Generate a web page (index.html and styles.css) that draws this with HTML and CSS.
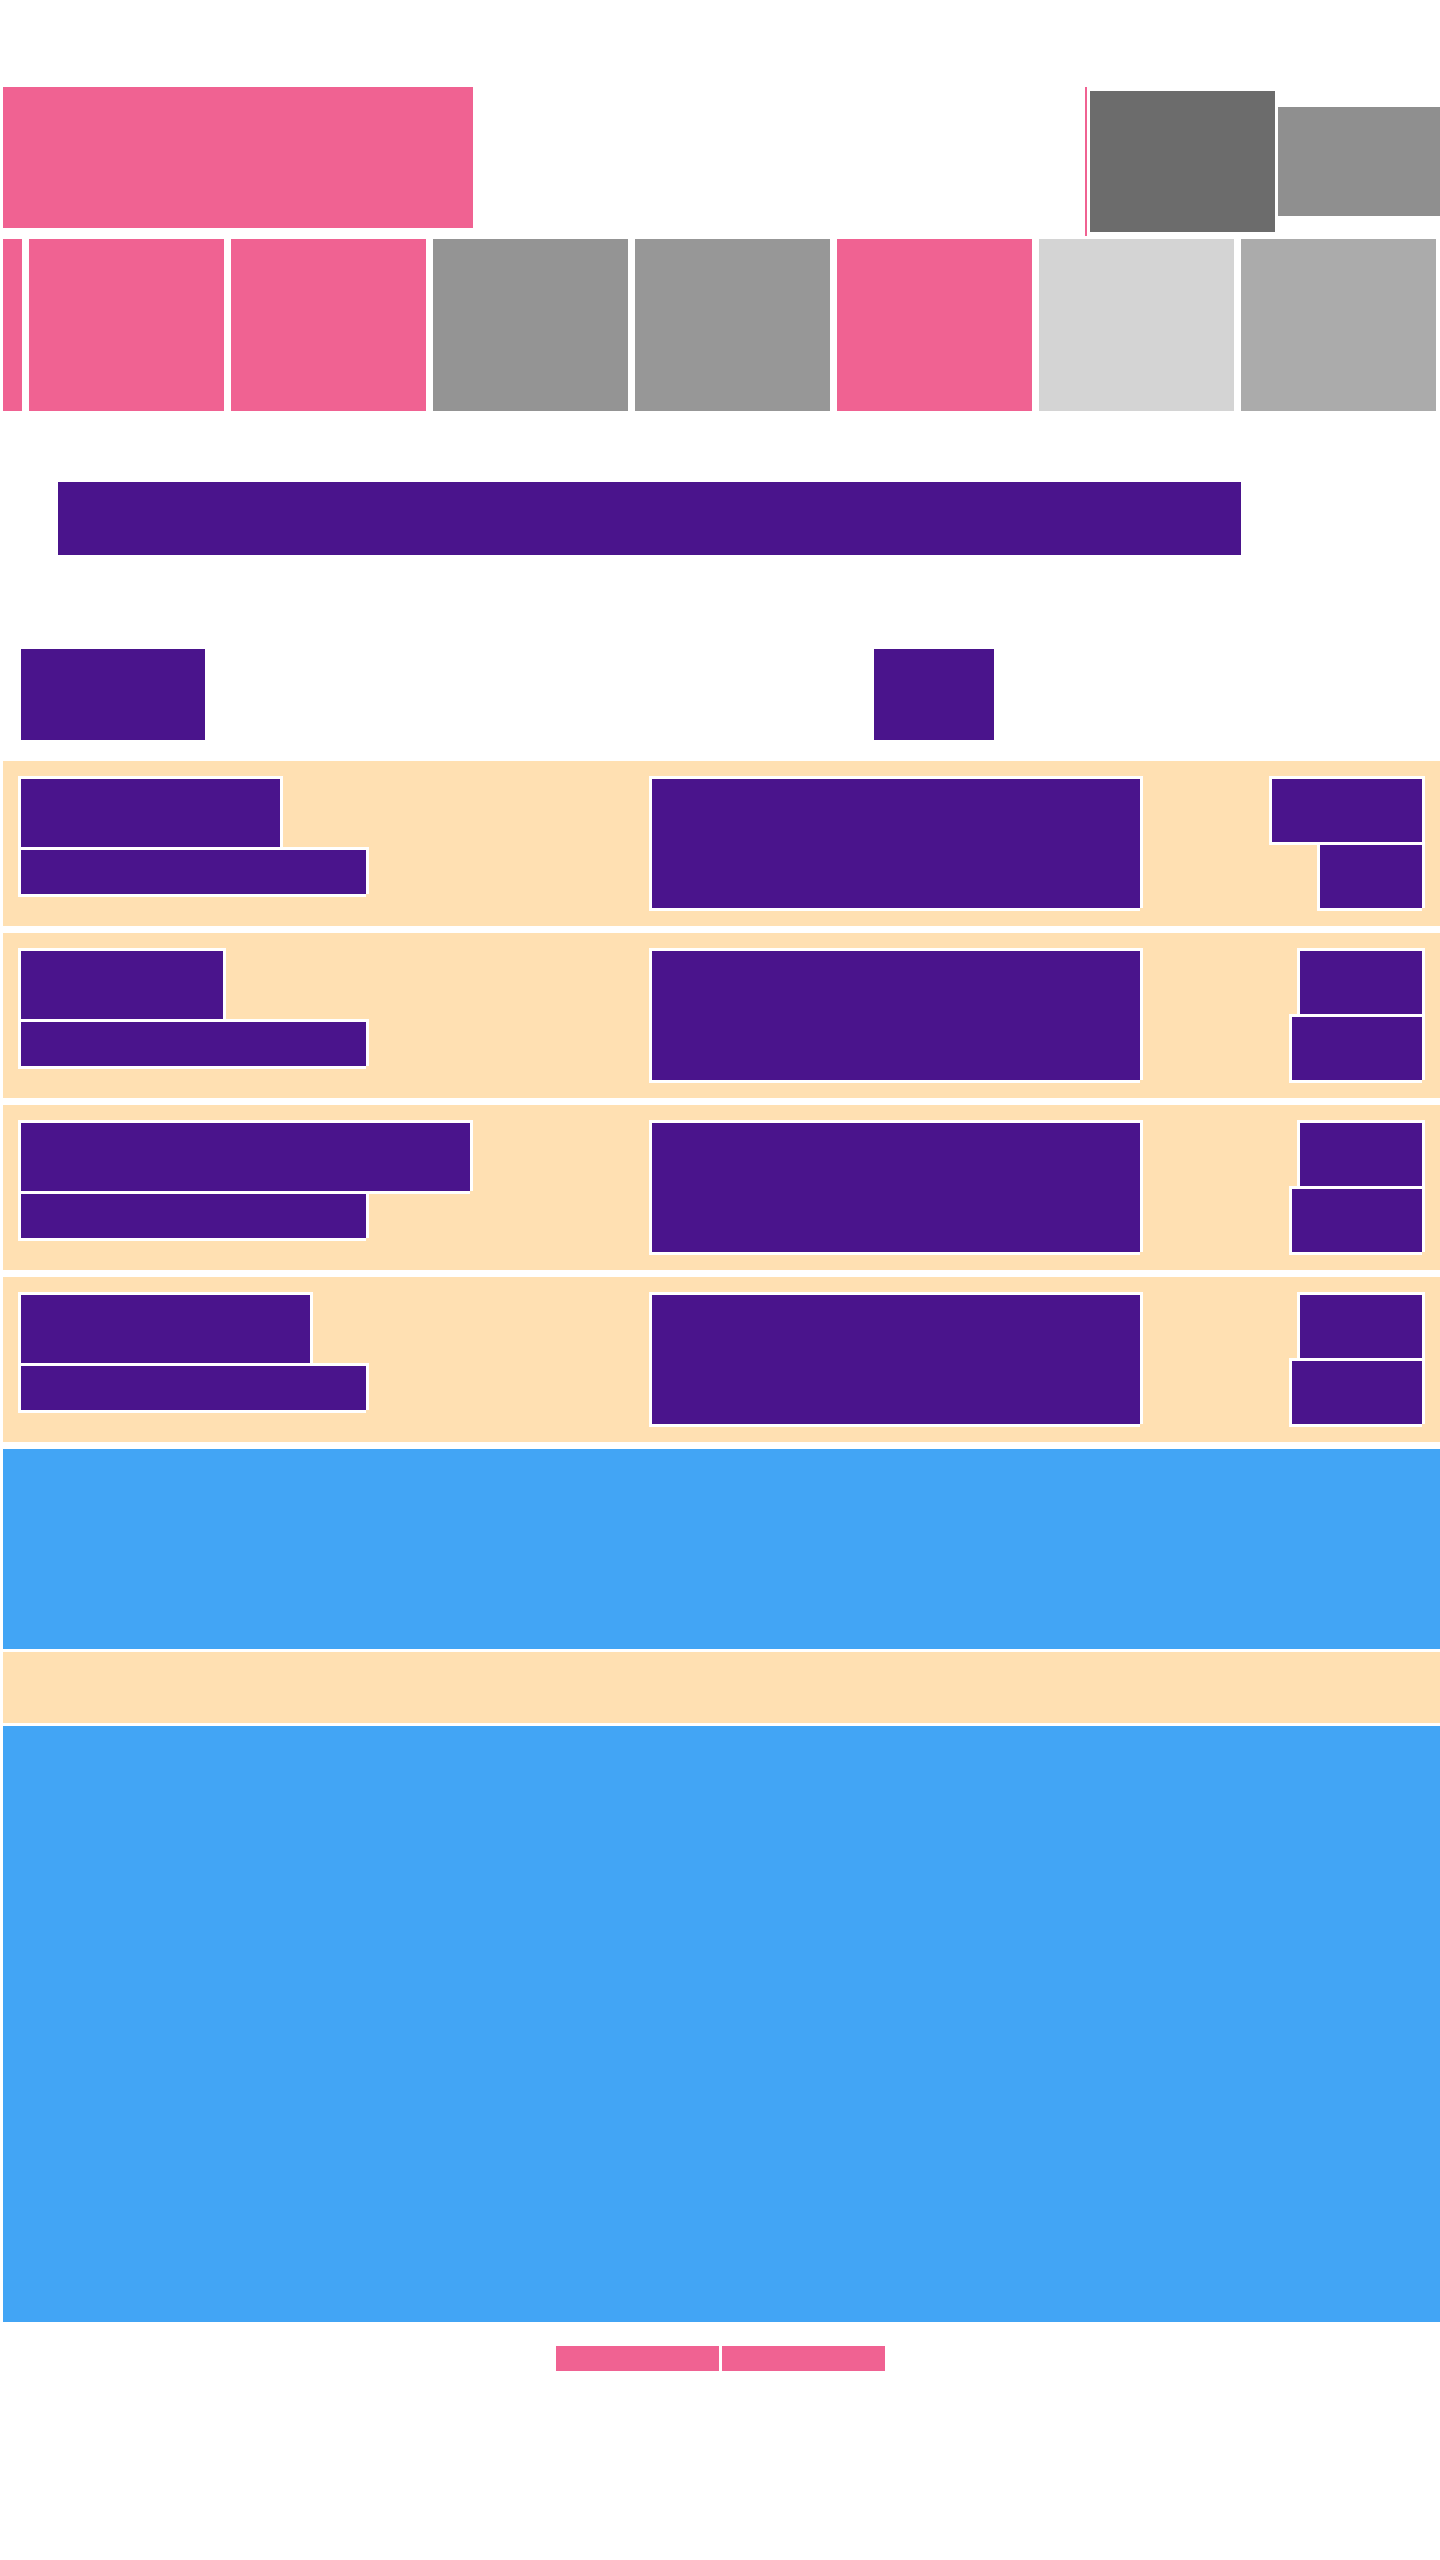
FILE: index.html
```html
<!DOCTYPE html>
<html lang="en">

<head>
    <meta charset="UTF-8">
    <meta name="viewport" content="width=device-width, initial-scale=1.0">
    <title>Wireframe</title>
    <link rel="stylesheet" href="styles.css">
</head>

<body>
    <div class="page">
        <!--Top bar-->
        <header class="topbar">
            <div class="logo"></div>
            <div class="topbar-right">
                <span class="divider"></span>
                <div class="avatar"></div>
                <div class="account"></div>
            </div>
        </header>

        <!--Carousel (scrolled a bit to the right)-->
        <div class="carousel">
            <div class="track">
                <div class="tile pink"></div>
                <div class="tile pink"></div>
                <div class="tile pink"></div>
                <div class="tile grey"></div>
                <div class="tile grey-2"></div>
                <div class="tile pink"></div>
                <div class="tile light"></div>
                <div class="tile mid"></div>
            </div>
        </div>

        <div class="banner"></div>

        <!--List header-->
        <div class="list-head">
            <div class="head-a"></div>
            <div class="head-b"></div>
        </div>

        <!--List rows-->
        <section class="list">
            <div class="item">
                <div class="item-info">
                    <div class="block title t1"></div>
                    <div class="block sub"></div>
                </div>
                <div class="block thumb"></div>
                <div class="item-meta">
                    <div class="block meta-a wide"></div>
                    <div class="block meta-b short"></div>
                </div>
            </div>
            <div class="item">
                <div class="item-info">
                    <div class="block title t2"></div>
                    <div class="block sub"></div>
                </div>
                <div class="block thumb"></div>
                <div class="item-meta">
                    <div class="block meta-a"></div>
                    <div class="block meta-b"></div>
                </div>
            </div>
            <div class="item">
                <div class="item-info">
                    <div class="block title t3"></div>
                    <div class="block sub"></div>
                </div>
                <div class="block thumb"></div>
                <div class="item-meta">
                    <div class="block meta-a"></div>
                    <div class="block meta-b"></div>
                </div>
            </div>
            <div class="item">
                <div class="item-info">
                    <div class="block title t4"></div>
                    <div class="block sub"></div>
                </div>
                <div class="block thumb"></div>
                <div class="item-meta">
                    <div class="block meta-a"></div>
                    <div class="block meta-b"></div>
                </div>
            </div>
        </section>

        <div class="panel"></div>
        <div class="strip"></div>
        <div class="panel big"></div>

        <!--Pager-->
        <div class="pager">
            <button class="pager-btn" title="previous"></button>
            <button class="pager-btn" title="next"></button>
        </div>
    </div>
</body>

</html>
```

FILE: styles.css
```css
* {
    margin: 0;
    padding: 0;
    box-sizing: border-box;
    font-family: 'Liberation Sans', Arial, sans-serif;
}

body {
    background: #ffffff;
}

.page {
    margin-left: 3px;
    width: 1437px;
    padding-bottom: 189px;
}

/* Top bar */
.topbar {
    display: flex;
    justify-content: space-between;
    align-items: flex-start;
    margin-top: 87px;
}

.logo {
    width: 470px;
    height: 141px;
    background: #f06292;
}

.topbar-right {
    display: flex;
    align-items: center;
    gap: 3px;
}

.divider {
    width: 2px;
    height: 149px;
    background: #f06292;
}

.avatar {
    width: 185px;
    height: 141px;
    background: #6c6c6c;
}

.account {
    width: 162px;
    height: 109px;
    background: #8f8f8f;
}

/* Carousel */
.carousel {
    margin-top: 3px;
    height: 172px;
    overflow: hidden;
}

.track {
    display: flex;
    gap: 7px;
    margin-left: -176px;
}

.tile {
    flex: 0 0 195px;
    height: 172px;
}

.tile.pink {
    background: #f06292;
}

.tile.grey {
    background: #949494;
}

.tile.grey-2 {
    background: #979797;
}

.tile.light {
    background: #d4d4d4;
}

.tile.mid {
    background: #ababab;
}

.banner {
    margin: 71px 0 0 55px;
    width: 1183px;
    height: 73px;
    background: #4a148c;
}

/* List header */
.list-head {
    display: grid;
    grid-template-columns: 853px 120px;
    margin-top: 94px;
    padding-left: 18px;
}

.head-a,
.head-b {
    height: 91px;
    background: #4a148c;
}

.head-a {
    width: 184px;
}

/* List rows */
.list {
    display: flex;
    flex-direction: column;
    gap: 7px;
    margin-top: 21px;
}

.item {
    display: grid;
    grid-template-columns: 631px 488px 1fr;
    align-items: start;
    padding: 18px;
    background: #ffe0b2;
}

.block {
    background: #4a148c;
    box-shadow: -3px -3px 0 #fff, 0 -3px 0 #fff, 3px -3px 0 #fff,
        -3px 0 0 #fff, 3px 0 0 #fff, -3px 3px 0 #fff, 0 3px 0 #fff;
}

.item-info {
    display: flex;
    flex-direction: column;
    align-items: flex-start;
    gap: 3px;
}

.title {
    height: 68px;
}

.t1 {
    width: 259px;
}

.t2 {
    width: 202px;
}

.t3 {
    width: 449px;
}

.t4 {
    width: 289px;
}

.sub {
    width: 345px;
    height: 44px;
}

.thumb {
    width: 488px;
    height: 129px;
}

.item-meta {
    display: flex;
    flex-direction: column;
    align-items: flex-end;
    gap: 3px;
}

.meta-a,
.meta-b {
    height: 63px;
}

.meta-a {
    width: 122px;
}

.meta-b {
    width: 130px;
}

.meta-a.wide {
    width: 150px;
}

.meta-b.short {
    width: 102px;
}

/* Lower panels */
.panel {
    margin-top: 7px;
    height: 200px;
    background: #42a5f5;
}

.strip {
    margin-top: 3px;
    height: 71px;
    background: #ffe0b2;
}

.panel.big {
    margin-top: 3px;
    height: 596px;
}

/* Pager */
.pager {
    display: flex;
    justify-content: center;
    gap: 3px;
    margin-top: 24px;
    margin-left: -3px;
    width: 1440px;
}

.pager-btn {
    width: 163px;
    height: 25px;
    border: none;
    background: #f06292;
    cursor: pointer;
}
```
